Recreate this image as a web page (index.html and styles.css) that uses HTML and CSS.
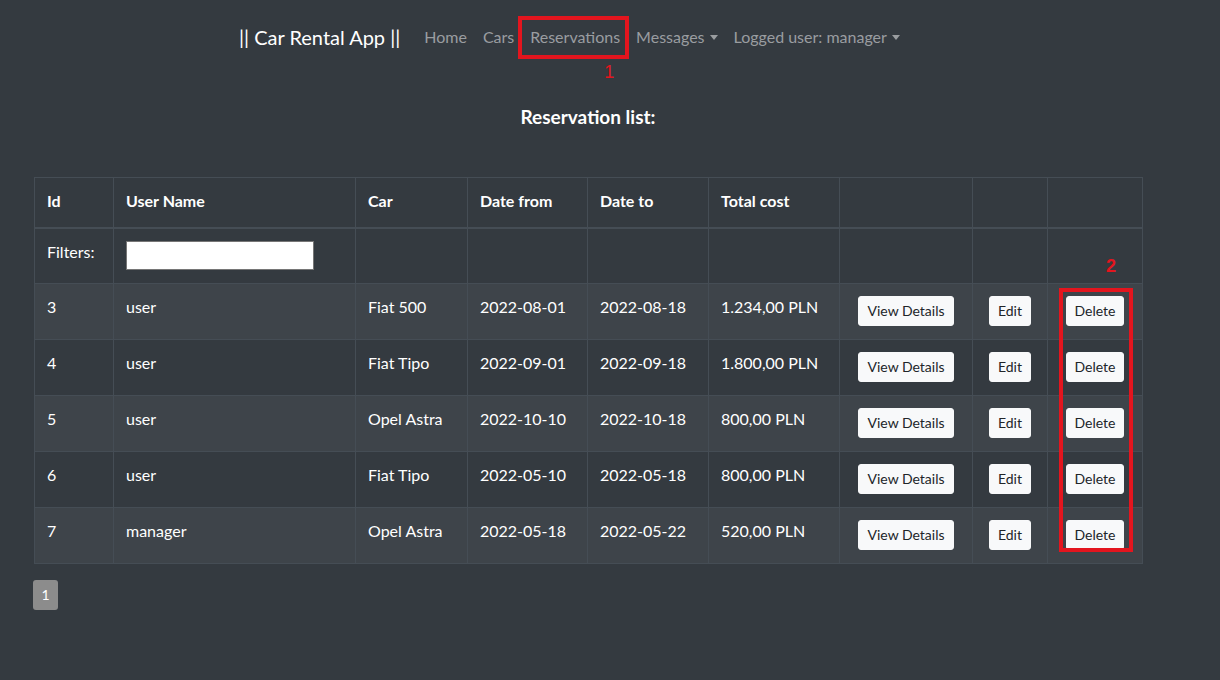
FILE: index.html
```html
<!DOCTYPE html>
<html lang="en">
<head>
<meta charset="utf-8">
<title>Car Rental App</title>
<link rel="stylesheet" href="styles.css">
</head>
<body>
<nav class="navbar">
  <a class="brand" href="#">|| Car Rental App ||</a>
  <ul class="nav">
    <li><a class="nav-link" href="#">Home</a></li>
    <li><a class="nav-link" href="#">Cars</a></li>
    <li class="marked">
      <a class="nav-link" href="#">Reservations</a>
      <span class="mark-box mark-box-nav"></span>
      <span class="mark-num mark-num-1">1</span>
    </li>
    <li><a class="nav-link dropdown" href="#">Messages</a></li>
    <li><a class="nav-link dropdown" href="#">Logged user: manager</a></li>
  </ul>
</nav>

<main class="content">
  <h2 class="title">Reservation list:</h2>

  <div class="table-wrap">
    <table class="table">
      <colgroup>
        <col class="c-id"><col class="c-user"><col class="c-car"><col class="c-from"><col class="c-to"><col class="c-cost"><col class="c-view"><col class="c-edit"><col class="c-del">
      </colgroup>
      <thead>
        <tr class="head">
          <th>Id</th><th>User Name</th><th>Car</th><th>Date from</th><th>Date to</th><th>Total cost</th><th></th><th></th><th></th>
        </tr>
        <tr class="filters">
          <td>Filters:</td><td><input class="filter-input" type="text"></td><td></td><td></td><td></td><td></td><td></td><td></td><td></td>
        </tr>
      </thead>
      <tbody>
        <tr><td>3</td><td>user</td><td>Fiat 500</td><td>2022-08-01</td><td>2022-08-18</td><td>1.234,00 PLN</td><td class="act"><button class="btn">View Details</button></td><td class="act"><button class="btn">Edit</button></td><td class="act"><button class="btn">Delete</button></td></tr>
        <tr><td>4</td><td>user</td><td>Fiat Tipo</td><td>2022-09-01</td><td>2022-09-18</td><td>1.800,00 PLN</td><td class="act"><button class="btn">View Details</button></td><td class="act"><button class="btn">Edit</button></td><td class="act"><button class="btn">Delete</button></td></tr>
        <tr><td>5</td><td>user</td><td>Opel Astra</td><td>2022-10-10</td><td>2022-10-18</td><td>800,00 PLN</td><td class="act"><button class="btn">View Details</button></td><td class="act"><button class="btn">Edit</button></td><td class="act"><button class="btn">Delete</button></td></tr>
        <tr><td>6</td><td>user</td><td>Fiat Tipo</td><td>2022-05-10</td><td>2022-05-18</td><td>800,00 PLN</td><td class="act"><button class="btn">View Details</button></td><td class="act"><button class="btn">Edit</button></td><td class="act"><button class="btn">Delete</button></td></tr>
        <tr><td>7</td><td>manager</td><td>Opel Astra</td><td>2022-05-18</td><td>2022-05-22</td><td>520,00 PLN</td><td class="act"><button class="btn">View Details</button></td><td class="act"><button class="btn">Edit</button></td><td class="act"><button class="btn">Delete</button></td></tr>
      </tbody>
    </table>
    <span class="mark-box mark-box-col"></span>
    <span class="mark-num mark-num-2">2</span>
  </div>

  <div class="pagination">
    <span class="page">1</span>
  </div>
</main>
</body>
</html>
```

FILE: styles.css
```css
* { box-sizing: border-box; }

html, body {
  margin: 0;
  padding: 0;
  background: #343a40;
  color: #fff;
  font-family: Lato, "Open Sans", sans-serif;
  font-size: 16px;
  line-height: 24px;
  height: 100%;
}

.navbar {
  display: flex;
  align-items: center;
  height: 74px;
  padding-left: 239px;
}

.brand {
  color: #fff;
  text-decoration: none;
  font-size: 20px;
  line-height: 30px;
  margin-right: 16px;
}

.nav {
  display: flex;
  list-style: none;
  margin: 0;
  padding: 0;
}

.nav li { position: relative; }

.nav-link {
  display: block;
  padding: 8px 8px;
  color: #9a9da0;
  text-decoration: none;
  font-size: 16px;
}

.dropdown::after {
  content: "";
  display: inline-block;
  margin-left: 5px;
  vertical-align: 3px;
  border-top: 5px solid #9a9da0;
  border-left: 4px solid transparent;
  border-right: 4px solid transparent;
}

.mark-box {
  position: absolute;
  border: 4px solid #e3151e;
  pointer-events: none;
}

.mark-box-nav {
  left: -4px;
  top: -1px;
  width: 111px;
  height: 43px;
}

.mark-num {
  position: absolute;
  color: #e3151e;
  font-family: "Liberation Sans", Arial, sans-serif;
  font-size: 18px;
  line-height: 20px;
}

.mark-num-1 {
  left: 82px;
  top: 45px;
}

.content {
  padding-left: 34px;
  width: 1142px;
}

.title {
  margin: 0;
  padding-top: 28px;
  height: 103px;
  text-align: center;
  font-size: 19px;
  font-weight: bold;
  line-height: 30px;
}

.table-wrap {
  position: relative;
  width: 1108px;
}

.table {
  width: 1108px;
  table-layout: fixed;
  border-collapse: collapse;
  border: 1px solid #7b7f83;
}

.c-id { width: 79px; }
.c-user { width: 242px; }
.c-car { width: 112px; }
.c-from { width: 120px; }
.c-to { width: 121px; }
.c-cost { width: 131px; }
.c-view { width: 133px; }
.c-edit { width: 75px; }
.c-del { width: 95px; }

.table th,
.table td {
  border: 1px solid #454d55;
  padding: 11px 12px 12px;
  vertical-align: top;
  text-align: left;
  font-size: 16px;
  line-height: 24px;
}

.table th {
  font-weight: bold;
}

.head th {
  height: 50px;
  border-bottom: 2px solid #454d55;
}

.filters td { height: 56px; }

.table tbody td { height: 56px; }

.table tbody tr:nth-child(odd) {
  background: #3e444a;
}

.table td.act {
  text-align: center;
}

.filter-input {
  display: block;
  width: 188px;
  height: 29px;
  margin: 1px 0 0;
  border: 1px solid #767676;
  background: #fff;
  border-radius: 0;
  padding: 0 4px;
}

.btn {
  display: inline-block;
  height: 30px;
  margin-top: 1px;
  padding: 0 8px;
  border: 1px solid #f8f9fa;
  border-radius: 3px;
  background: #f8f9fa;
  color: #212529;
  font-family: Lato, "Open Sans", sans-serif;
  font-size: 14px;
  line-height: 28px;
}

.mark-box-col {
  left: 1025px;
  top: 111px;
  width: 74px;
  height: 264px;
}

.mark-num-2 {
  left: 1072px;
  top: 79px;
  font-weight: bold;
}

.pagination {
  display: flex;
  padding-top: 16px;
  margin-left: -1px;
}

.page {
  display: block;
  width: 25px;
  height: 30px;
  border-radius: 3px;
  background: #8c8c8c;
  color: #fff;
  font-size: 14px;
  line-height: 30px;
  text-align: center;
}
```
